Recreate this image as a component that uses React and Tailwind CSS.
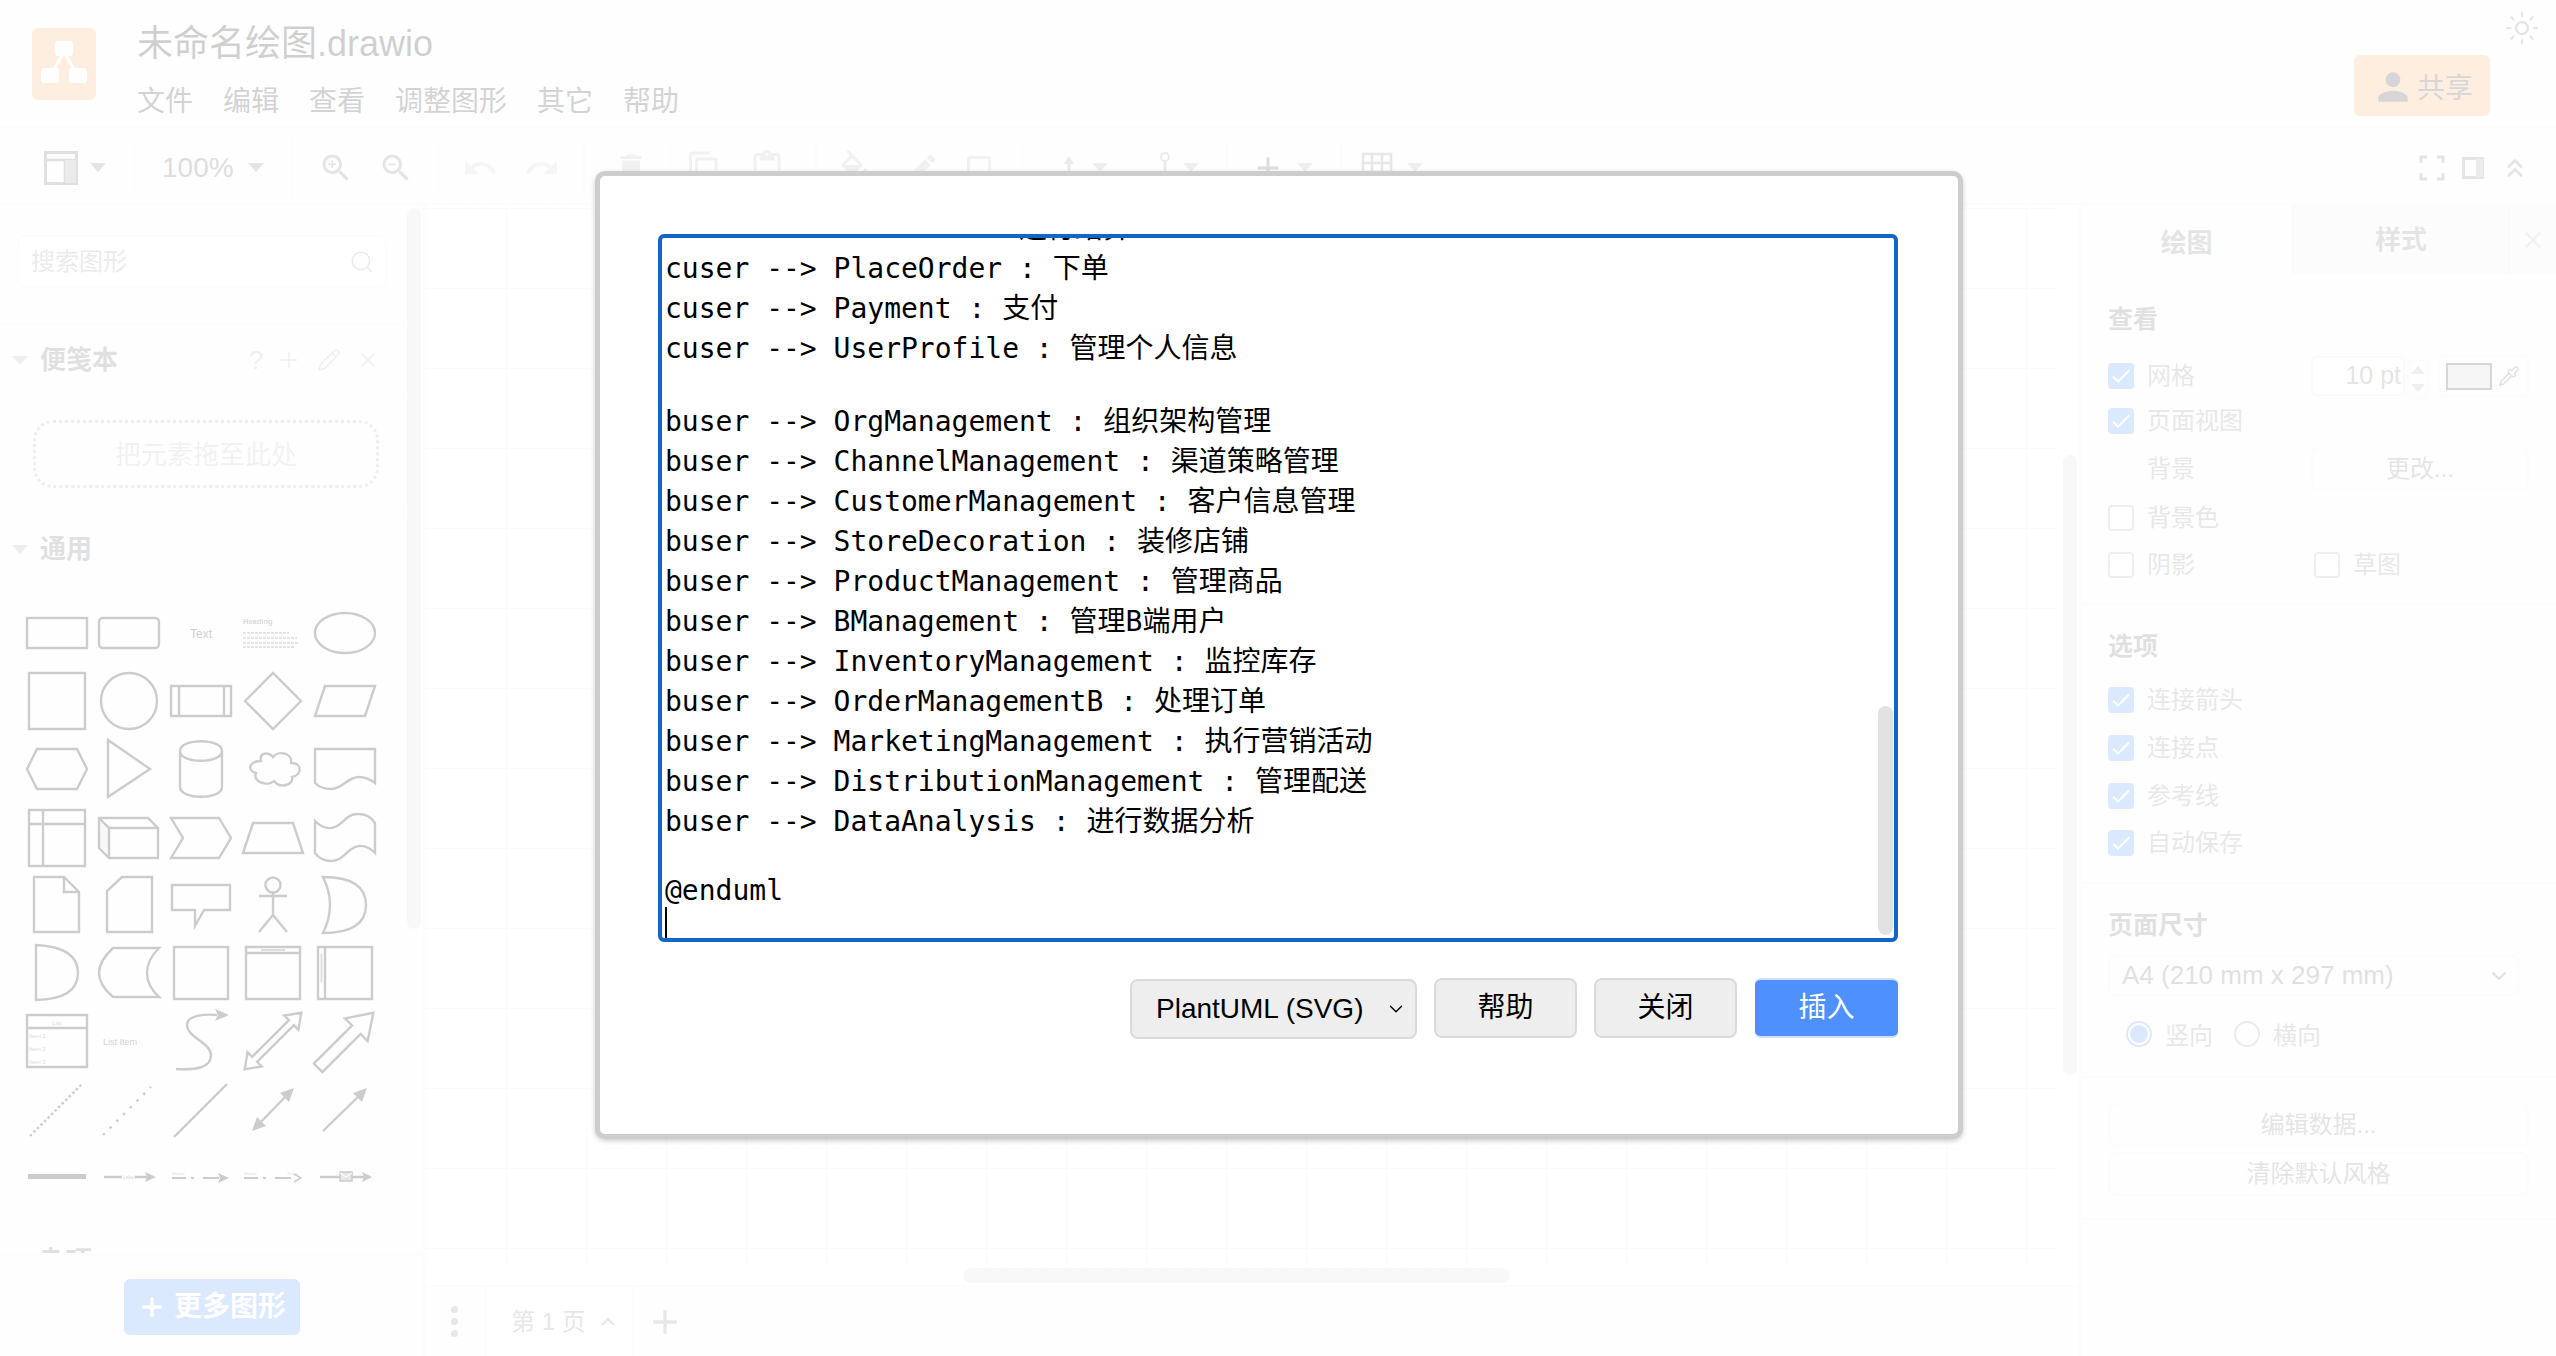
import React from 'react';
import { MdZoomIn, MdZoomOut, MdUndo, MdRedo, MdDelete, MdContentCopy, MdContentPaste, MdFormatColorFill, MdEdit, MdCropSquare, MdAdd, MdPerson, MdClose, MdCheck } from 'react-icons/md';
import { Sun, Search, ChevronsUp, Pipette, ChevronDown, Plus, X, Pencil } from 'lucide-react';

const cuserLines = [
    ['cuser --> Checkout : ', '进行结算'],
    ['cuser --> PlaceOrder : ', '下单'],
    ['cuser --> Payment : ', '支付'],
    ['cuser --> UserProfile : ', '管理个人信息'],
];

const buserLines = [
    ['buser --> OrgManagement : ', '组织架构管理'],
    ['buser --> ChannelManagement : ', '渠道策略管理'],
    ['buser --> CustomerManagement : ', '客户信息管理'],
    ['buser --> StoreDecoration : ', '装修店铺'],
    ['buser --> ProductManagement : ', '管理商品'],
    ['buser --> BManagement : ', '管理B端用户'],
    ['buser --> InventoryManagement : ', '监控库存'],
    ['buser --> OrderManagementB : ', '处理订单'],
    ['buser --> MarketingManagement : ', '执行营销活动'],
    ['buser --> DistributionManagement : ', '管理配送'],
    ['buser --> DataAnalysis : ', '进行数据分析'],
];

const Caret = ({ className = '', fill = '#777' }) => (
    <svg width="16" height="9" viewBox="0 0 16 9" className={`shrink-0 ${className}`}>
        <polygon points="0,0 16,0 8,9" fill={fill} />
    </svg>
);

const Sep = ({ className = '' }) => <div className={`w-[2px] h-[56px] bg-[#eeeeee] shrink-0 ${className}`} />;

const Tool = ({ icon: Icon, className = '', color = 'text-[#bbb]' }) => (
    <Icon size={36} className={`shrink-0 ${color} ${className}`} />
);

const ConnectionIcon = ({ className = '' }) => (
    <svg width="36" height="36" viewBox="0 0 36 36" className={`shrink-0 ${className}`}>
        <path d="M2 26h22M22 10v16" stroke="#999" strokeWidth="3" fill="none" />
        <polygon points="22,6 27,14 17,14" fill="#999" />
    </svg>
);

const WaypointIcon = ({ className = '' }) => (
    <svg width="36" height="36" viewBox="0 0 36 36" className={`shrink-0 ${className}`}>
        <path d="M0 28h18V10" stroke="#999" strokeWidth="3" fill="none" />
        <circle cx="18" cy="7" r="4" stroke="#999" strokeWidth="2" fill="none" />
    </svg>
);

const TableIcon = ({ className = '' }) => (
    <svg width="36" height="36" viewBox="0 0 36 36" className={`shrink-0 ${className}`}>
        <path d="M4 4h28v28H4zM4 13h28M4 22h28M13 4v28M23 4v28" stroke="#888" strokeWidth="2.5" fill="none" />
    </svg>
);

const s = { fill: 'none', stroke: '#000', strokeWidth: 2.4 };
const tiny = { fill: '#333', fontFamily: 'Liberation Sans, sans-serif' };

// sidebar palette, each cell is 72x68
const shapes = [
    <rect x="6" y="19" width="60" height="30" {...s} />,
    <rect x="6" y="19" width="60" height="30" rx="4" {...s} />,
    <text x="36" y="39" textAnchor="middle" fontSize="12" {...tiny} fill="#000">Text</text>,
    <g>
        <text x="6" y="25" fontSize="7.5" fontWeight="bold" {...tiny}>Heading</text>
        <path d="M6 34h46M6 39h54M6 44h56M6 48h52" stroke="#555" strokeWidth="1.5" strokeDasharray="3 1" fill="none" />
    </g>,
    <ellipse cx="36" cy="34" rx="30" ry="20" {...s} />,

    <rect x="8" y="6" width="56" height="56" {...s} />,
    <circle cx="36" cy="34" r="28" {...s} />,
    <path d="M6 19h60v30H6zM14 19v30M59 19v30" {...s} />,
    <polygon points="8,34 36,6 64,34 36,62" {...s} />,
    <polygon points="6,49 16,19 66,19 56,49" {...s} />,

    <polygon points="6,34 16,14 56,14 66,34 56,54 16,54" {...s} />,
    <polygon points="15,5 57,34 15,62" {...s} />,
    <path d="M15 16c0-13 42-13 42 0v36c0 13-42 13-42 0zM15 16c0 13 42 13 42 0" {...s} />,
    <path d="M24 26C13 26 9 35 19 38c-4 9 12 14 18 8 6 8 20 4 18-4 10-2 11-14-1-14 2-10-13-13-18-6-5-6-14-4-12 4z" {...s} />,
    <path d="M6 14h60v34q-8-6-16-6c-12 0-16 12-28 12q-10 0-16-6z" {...s} />,

    <path d="M8 7h56v56H8zM8 21h56M22 7v56" {...s} />,
    <g><path d="M6 15h49l10 10v30H16L6 45z" {...s} /><path d="M6 15l10 10h49M16 25v30" {...s} /><polygon points="6,15 16,25 16,55 6,45" fill="#000" opacity="0.12" /></g>,
    <polygon points="6,15 54,15 66,35 54,55 6,55 18,35" {...s} />,
    <polygon points="6,50 16,20 56,20 66,50" {...s} />,
    <path d="M6 18q8 8 16 7c12-1 14-15 28-14q10 0 16 9v30q-8-8-16-7c-12 1-14 15-28 15q-10 0-16-8z" {...s} />,

    <path d="M13 6h30l15 15v40H13zM43 6v15h15" {...s} />,
    <polygon points="29,6 59,6 59,61 14,61 14,20" {...s} />,
    <polygon points="7,14 65,14 65,39 39,39 30,55 30,39 7,39" {...s} />,
    <g><circle cx="36" cy="14" r="7.500" {...s} /><path d="M22 25h28M36 22v22M36 44L22 61M36 44l14 17" {...s} /></g>,
    <path d="M14 6q43 0 43 28T14 62q14-28 0-56z" {...s} />,

    <path d="M15 6q42 2 42 28t-42 27z" {...s} />,
    <path d="M20 9h46q-12 12-12 25t12 24H20Q6 46 6 34T20 9z" {...s} />,
    <rect x="9" y="8" width="54" height="52" {...s} />,
    <g><path d="M9 8h54v52H9zM9 14h54" {...s} /><path d="M24 11h24" stroke="#555" strokeWidth="2" /></g>,
    <g><path d="M9 8h54v52H9zM16 8v52" {...s} /><path d="M12.500 15v28" stroke="#555" strokeWidth="2" /></g>,

    <g>
        <path d="M6 8h60v52H6zM6 21h60" {...s} />
        <text x="36" y="18" textAnchor="middle" fontSize="6" {...tiny}>List</text>
        <text x="8" y="31" fontSize="6" {...tiny}>Item 1</text>
        <text x="8" y="44" fontSize="6" {...tiny}>Item 2</text>
        <text x="8" y="57" fontSize="6" {...tiny}>Item 3</text>
    </g>,
    <text x="10" y="38" fontSize="9" {...tiny} fill="#000">List Item</text>,
    <g><path d="M11 62c20 1 35-1 35-14 0-12-24-18-24-30 0-10 18-11 30-10" {...s} /><polygon points="64,8 50,2 53,8 50,14" fill="#000" /></g>,
    <polygon transform="rotate(-45 36 34)" points="-4,34 10,24 10,30.500 62,30.500 62,24 76,34 62,44 62,37.500 10,37.500 10,44" {...s} />,
    <polygon transform="rotate(-45 36 34)" points="-2,28 52,28 52,18 76,34 52,50 52,40 -2,40" {...s} />,

    <path d="M9 61L61 9" fill="none" stroke="#000" strokeWidth="2.4" strokeDasharray="2.500 2.500" />,
    <path d="M10 60L58 12" fill="none" stroke="#000" strokeWidth="2.400" strokeDasharray="2.500 7" />,
    <path d="M9 62L62 9" {...s} />,
    <g><path d="M19 52L53 17" {...s} /><polygon points="57,13 52,27 43,18" fill="#000" /><polygon points="15,56 20,42 29,51" fill="#000" /></g>,
    <g><path d="M14 56L54 17" {...s} /><polygon points="58,13 53,27 44,18" fill="#000" /></g>,

    <rect x="7" y="31" width="58" height="5" fill="#000" />,
    <g><path d="M11 34h18M42 34h12" {...s} /><polygon points="63,34 52,29 54,34 52,39" fill="#000" /><text x="36" y="36" textAnchor="middle" fontSize="5" {...tiny}>Label</text></g>,
    <g><path d="M7 35h14M26 35h3M38 35h16" {...s} strokeWidth="2" /><polygon points="64,35 53,30 55,35 53,40" fill="#000" /><text x="7" y="32" fontSize="4" {...tiny}>Source</text></g>,
    <g><path d="M7 35h14M26 35h3M38 35h16" {...s} strokeWidth="2" /><path d="M57 31l7 4-7 4" {...s} strokeWidth="1.500" /><text x="7" y="32" fontSize="4" {...tiny}>Source</text><text x="50" y="32" fontSize="4" {...tiny}>Target</text></g>,
    <g><path d="M11 34h50" {...s} /><polygon points="63,34 53,29 55,34 53,39" fill="#000" /><rect x="31" y="29" width="12" height="9" fill="#888" stroke="#000" strokeWidth="1.500" /><path d="M31 30l6 4 6-4" fill="none" stroke="#fff" strokeWidth="1" /></g>,
];

const Palette = () => (
    <div className="grid grid-cols-[repeat(5,72px)] auto-rows-[68px] pl-[21px] pt-[14px] h-[638px]">
        {shapes.map((shape, i) => (
            <svg key={i} width="72" height="68" viewBox="0 0 72 68">{shape}</svg>
        ))}
    </div>
);

const Section = ({ title, right }) => (
    <div className="flex items-center h-full pl-[12px] pt-[2px]">
        <Caret className="opacity-60" />
        <span className="ml-[12px] text-[26px] font-bold text-[#666]">{title}</span>
        {right}
    </div>
);

const Sidebar = () => (
    <div className="relative w-[425px] shrink-0 flex flex-col bg-[#fbfbfb] border-r-2 border-[#f2f2f2]">
        <div className="flex-1 overflow-hidden w-[405px]">
            <div className="h-[120px] border-b-2 border-[#eeeeee] pt-[30px] pl-[17px]">
                <div className="w-[370px] h-[53px] rounded-[8px] border-2 border-[#eeeeee] bg-white flex items-center justify-between pl-[12px] pr-[10px]">
                    <span className="text-[24px] text-[#999]">搜索图形</span>
                    <Search size={26} strokeWidth={1.500} className="text-[#999]" />
                </div>
            </div>
            <div className="h-[70px] border-b-2 border-[#f4f4f4]">
                <Section title="便笺本" right={
                    <div className="ml-auto flex items-center mr-[24px] text-[#aaa]">
                        <span className="text-[26px] w-[20px] text-center">?</span>
                        <Plus size={26} strokeWidth={1.500} className="ml-[10px]" />
                        <Pencil size={24} strokeWidth={1.500} className="ml-[15px]" />
                        <X size={26} strokeWidth={1.500} className="ml-[14px]" />
                    </div>
                } />
            </div>
            <div className="h-[118px] border-b-2 border-[#eeeeee] pt-[25px] pl-[33px]">
                <div className="w-[346px] h-[68px] pt-[2px] rounded-[20px] border-[3px] border-dotted border-[#aaaaaa] flex items-center justify-center text-[26px] text-[#bbb]">把元素拖至此处</div>
            </div>
            <div className="h-[72px] border-b-2 border-[#f4f4f4]">
                <Section title="通用" />
            </div>
            <Palette />
            <div className="border-t-2 border-[#eeeeee] h-[72px]">
                <Section title="杂项" />
            </div>
        </div>
        <div className="h-[103px] shrink-0 border-t-2 border-[#eeeeee] bg-[#fbfbfb] pt-[24px] pl-[124px] relative">
            <div className="w-[176px] h-[56px] rounded-[6px] bg-[#4d90fe] text-white font-bold text-[28px] flex items-center justify-center gap-[8px]">
                <Plus size={28} strokeWidth={3} />
                <span>更多图形</span>
            </div>
        </div>
        <div className="absolute left-[407px] top-[3px] w-[14px] h-[721px] rounded-full bg-[#dddddd]" />
    </div>
);

const Check = ({ on, className = '' }) => (
    <div className={`w-[26px] h-[26px] rounded-[4px] shrink-0 flex items-center justify-center ${on ? 'bg-[#4d90fe]' : 'border-2 border-[#aaaaaa] bg-white'} ${className}`}>
        {on && <MdCheck size={24} className="text-white" />}
    </div>
);

const Row = ({ on, label, className = '', children }) => (
    <div className={`h-[44px] flex items-center ${className}`}>
        {on !== undefined ? <Check on={on} /> : <div className="w-[26px] shrink-0" />}
        <span className="ml-[13px] text-[24px] text-[#888]">{label}</span>
        {children}
    </div>
);

const PanelTitle = ({ children }) => <div className="h-[40px] flex items-center text-[25px] font-bold text-[#666]">{children}</div>;

const WideButton = ({ children, className = '' }) => (
    <div className={`h-[44px] rounded-[8px] border-2 border-[#eeeeee] bg-[#fafafa] flex items-center justify-center text-[24px] text-[#777] ${className}`}>{children}</div>
);

const FormatPanel = () => (
    <div className="w-[477px] shrink-0 bg-[#f8f8f8] border-l-2 border-[#eeeeee] flex flex-col">
        <div className="h-[69px] flex shrink-0">
            <div className="w-[211px] bg-[#f8f8f8] flex items-center justify-center text-[26px] font-bold text-[#777] pt-[8px]">绘图</div>
            <div className="w-[216px] bg-[#eeeeee] flex items-center justify-center text-[26px] font-bold text-[#777] pt-[2px] border-l-2 border-[#e8e8e8]">样式</div>
            <div className="flex-1 bg-[#eeeeee] flex items-center justify-center border-l-2 border-[#e8e8e8]">
                <MdClose size={28} className="text-[#bbb]" />
            </div>
        </div>
        <div className="pl-[27px] pr-[27px] pt-[26px] pb-[16px] border-b-2 border-[#eeeeee]">
            <PanelTitle>查看</PanelTitle>
            <Row on label="网格" className="mt-[14px]">
                <div className="ml-auto flex items-center gap-[2px]">
                    <div className="w-[94px] h-[40px] rounded-[6px] border-2 border-[#e4e4e4] bg-white flex items-center justify-end pr-[2px] text-[25px] text-[#777]">10 pt</div>
                    <div className="w-[22px] h-[40px] mt-[5px] rounded-[6px] border-2 border-[#eeeeee] flex flex-col items-center justify-around">
                        <svg width="14" height="8" viewBox="0 0 14 8"><polygon points="7,0 14,8 0,8" fill="#aaa" /></svg>
                        <svg width="14" height="8" viewBox="0 0 14 8"><polygon points="0,0 14,0 7,8" fill="#aaa" /></svg>
                    </div>
                    <div className="ml-[7px] w-[91px] h-[42px] rounded-[6px] border-2 border-[#eeeeee] flex items-center pl-[6px]">
                        <div className="w-[46px] h-[27px] border-2 border-[#333333] bg-[#cccccc]" />
                        <Pipette size={22} strokeWidth={1.500} className="ml-[6px] text-[#666]" />
                    </div>
                </div>
            </Row>
            <Row on label="页面视图" className="mt-[1px]" />
            <Row label="背景" className="mt-[4px]">
                <WideButton className="ml-auto w-[218px]">更改...</WideButton>
            </Row>
            <Row on={false} label="背景色" className="mt-[5px]" />
            <Row on={false} label="阴影" className="mt-[3px]">
                <Check on={false} className="ml-[119px]" />
                <span className="ml-[13px] text-[24px] text-[#888]">草图</span>
            </Row>
        </div>
        <div className="pl-[27px] pr-[27px] pt-[22px] pb-[17px] border-b-2 border-[#eeeeee]">
            <PanelTitle>选项</PanelTitle>
            <Row on label="连接箭头" className="mt-[11px]" />
            <Row on label="连接点" className="mt-[4px]" />
            <Row on label="参考线" className="mt-[4px]" />
            <Row on label="自动保存" className="mt-[3px]" />
        </div>
        <div className="pl-[27px] pr-[27px] pt-[22px] pb-[18px] border-b-2 border-[#eeeeee]">
            <PanelTitle>页面尺寸</PanelTitle>
            <div className="mt-[9px] w-[411px] h-[41px] rounded-[6px] border-2 border-[#eeeeee] bg-[#f8f8f8] flex items-center justify-between pl-[12px] pr-[6px] text-[26px] text-[#666]">
                <span>A4 (210 mm x 297 mm)</span>
                <ChevronDown size={24} className="text-[#666]" />
            </div>
            <div className="mt-[18px] h-[44px] flex items-center pl-[18px] text-[24px] text-[#888]">
                <div className="w-[26px] h-[26px] rounded-full border-2 border-[#4d90fe] flex items-center justify-center -mt-[5px]">
                    <div className="w-[18px] h-[18px] rounded-full bg-[#4d90fe]" />
                </div>
                <span className="ml-[13px]">竖向</span>
                <div className="ml-[21px] w-[26px] h-[26px] rounded-full border-2 border-[#999999] -mt-[5px]" />
                <span className="ml-[13px]">横向</span>
            </div>
        </div>
        <div className="pl-[27px] pr-[27px] pt-[25px] pb-[22px] border-b-2 border-[#eeeeee]">
            <WideButton>编辑数据...</WideButton>
            <WideButton className="mt-[5px]">清除默认风格</WideButton>
        </div>
    </div>
);

const Canvas = () => (
    <div className="relative flex-1 flex flex-col min-w-0">
        <div className="flex-1 relative bg-white bg-[linear-gradient(#e8e8e8_1px,transparent_1px),linear-gradient(90deg,#e8e8e8_1px,transparent_1px),linear-gradient(#f3f3f3_1px,transparent_1px),linear-gradient(90deg,#f3f3f3_1px,transparent_1px)] bg-[size:80px_80px,80px_80px,20px_20px,20px_20px] bg-[position:1px_3px,1px_3px,1px_3px,1px_3px]">
            <div className="absolute right-0 top-0 bottom-0 w-[20px] bg-white" />
            <div className="absolute left-0 right-0 bottom-0 h-[20px] bg-white" />
            <div className="absolute left-[538px] bottom-[2px] w-[547px] h-[15px] rounded-full bg-[#dddddd]" />
            <div className="absolute right-[2px] top-[250px] w-[14px] h-[620px] rounded-full bg-[#dddddd]" />
        </div>
        <div className="h-[71px] shrink-0 border-t-2 border-[#eeeeee] bg-[#f8f8f8] flex items-center">
            <div className="w-[62px] h-full border-r-2 border-[#eeeeee] flex flex-col items-center justify-center gap-[5px] pr-[2px]">
                <div className="w-[7px] h-[7px] rounded-full bg-[#888]" />
                <div className="w-[7px] h-[7px] rounded-full bg-[#888]" />
                <div className="w-[7px] h-[7px] rounded-full bg-[#888]" />
            </div>
            <div className="w-[147px] h-full border-r-2 border-[#eeeeee] bg-white flex items-center pl-[24px] text-[24px] text-[#888]">
                <span>第 1 页</span>
                <svg width="14" height="9" viewBox="0 0 14 9" className="ml-[15px]"><path d="M1 8l6-6 6 6" fill="none" stroke="#888" strokeWidth="2" /></svg>
            </div>
            <MdAdd size={40} className="ml-[11px] text-[#888]" />
        </div>
    </div>
);

const Header = () => (
    <div className="h-[128px] shrink-0 border-b-2 border-[#eeeeee] flex relative pl-[32px] pt-[28px]">
        <svg width="64" height="72" viewBox="0 0 64 72" className="shrink-0">
            <rect width="64" height="72" rx="6" fill="#f5a85f" />
            <path d="M32 24L18 48M32 24l14 24" stroke="#fff" strokeWidth="3" />
            <rect x="23" y="13" width="18" height="15" rx="3" fill="#fff" />
            <rect x="9" y="40" width="18" height="15" rx="3" fill="#fff" />
            <rect x="37" y="40" width="18" height="15" rx="3" fill="#fff" />
        </svg>
        <div className="ml-[41px] -mt-[28px]">
            <div className="h-[87px] flex items-center text-[36px] text-[#111]">未命名绘图.drawio</div>
            <div className="flex gap-[30px] text-[28px] text-[#222] -mt-[3px] leading-[36px]">
                <span>文件</span><span>编辑</span><span>查看</span><span>调整图形</span><span>其它</span><span>帮助</span>
            </div>
        </div>
        <Sun size={36} strokeWidth={1.500} className="absolute right-[16px] top-[10px] text-[#777]" />
        <div className="absolute left-[2354px] top-[55px] w-[136px] h-[61px] rounded-[6px] bg-[#f5a85f] flex items-center justify-center gap-[2px] pt-[6px] text-[28px] text-[#333]">
            <MdPerson size={44} className="text-[#333] -mt-[4px]" />
            <span>共享</span>
        </div>
    </div>
);

const Toolbar = () => (
    <div className="h-[77px] shrink-0 border-b-2 border-[#eeeeee] flex items-center pl-[44px] pr-[26px] pt-[4px] bg-[#f8f8f8]">
        <svg width="34" height="34" viewBox="0 0 34 34" className="shrink-0">
            <rect x="1.500" y="1.500" width="31" height="31" fill="none" stroke="#666" strokeWidth="3" />
            <path d="M1.500 9h31M21 9v24" stroke="#666" strokeWidth="2.500" fill="none" />
            <rect x="21" y="9" width="11" height="23" fill="#999" />
        </svg>
        <Caret className="ml-[12px]" />
        <Sep className="ml-[27px]" />
        <span className="ml-[27px] text-[28px] text-[#555]">100%</span>
        <Caret className="ml-[14px]" />
        <Sep className="ml-[27px]" />
        <Tool icon={MdZoomIn} className="ml-[25px]" color="text-[#777]" />
        <Tool icon={MdZoomOut} className="ml-[24px]" color="text-[#777]" />
        <Sep className="ml-[23px]" />
        <Tool icon={MdUndo} className="ml-[23px]" color="text-[#ccc]" />
        <Tool icon={MdRedo} className="ml-[26px]" color="text-[#ccc]" />
        <Sep className="ml-[23px]" />
        <Tool icon={MdDelete} className="ml-[28px]" />
        <Sep className="ml-[20px]" />
        <Tool icon={MdContentCopy} className="ml-[15px]" />
        <Tool icon={MdContentPaste} className="ml-[27px]" />
        <Sep className="ml-[30px]" />
        <Tool icon={MdFormatColorFill} className="ml-[20px]" />
        <Tool icon={MdEdit} className="ml-[31px]" />
        <Tool icon={MdCropSquare} className="ml-[21px]" />
        <Sep className="ml-[24px]" />
        <ConnectionIcon className="ml-[24px]" />
        <Caret className="ml-[9px]" fill="#aaa" />
        <WaypointIcon className="ml-[39px]" />
        <Caret className="ml-0" fill="#aaa" />
        <Sep className="ml-[27px]" />
        <Tool icon={MdAdd} className="ml-[22px]" color="text-[#555]" />
        <Caret className="ml-[11px]" fill="#aaa" />
        <Sep className="ml-[27px]" />
        <TableIcon className="ml-[17px]" />
        <Caret className="ml-[12px]" fill="#aaa" />
        <div className="ml-auto flex items-center">
            <svg width="26" height="26" viewBox="0 0 26 26">
                <path d="M2 8V2h6M18 2h6v6M24 18v6h-6M8 24H2v-6" fill="none" stroke="#777" strokeWidth="3" />
            </svg>
            <svg width="22" height="22" viewBox="0 0 22 22" className="ml-[17px]">
                <rect x="1.500" y="1.500" width="19" height="19" fill="none" stroke="#777" strokeWidth="3" />
                <rect x="14" y="2" width="7" height="18" fill="#999" />
            </svg>
            <ChevronsUp size={30} className="ml-[16px] text-[#777]" />
        </div>
    </div>
);

const CodeLine = ({ text, cn }) => (
    <div className="h-[40px] flex items-center whitespace-pre">{text}{cn}</div>
);

const Dialog = () => (
    <div className="absolute left-[595px] top-[171px] w-[1368px] h-[968px] rounded-[10px] border-[5px] border-[#cdcdcd] bg-white shadow-[0_2px_5px_rgba(0,0,0,0.2)] pt-[58px] px-[58px]">
        <div className="relative h-[708px] w-[1240px] rounded-[6px] border-4 border-[#1565c8] overflow-hidden bg-white pl-[3px] font-['DejaVu_Sans_Mono','Noto_Sans_CJK_SC',monospace] text-[28px] text-black">
            <div className="-mt-[29px]">
                {cuserLines.map(([a, b]) => <CodeLine key={a} text={a} cn={b} />)}
                <div className="h-[33px]" />
                {buserLines.map(([a, b]) => <CodeLine key={a} text={a} cn={b} />)}
                <div className="h-[32px]" />
                <div className="h-[33px] flex items-center">@enduml</div>
                <div className="h-[31px] w-[2px] bg-black" />
            </div>
            <div className="absolute right-[1px] bottom-[3px] w-[15px] h-[229px] rounded-full bg-[#e2e2e2]" />
        </div>
        <div className="mt-[36px] flex justify-end items-start text-[28px] w-[1240px]">
            <div className="w-[287px] h-[60px] mt-[1px] rounded-[8px] border-2 border-[#dadada] bg-[#eeeeee] flex items-center justify-between pl-[24px] pr-[8px] text-black">
                <span>PlantUML (SVG)</span>
                <ChevronDown size={22} strokeWidth={1.500} />
            </div>
            <div className="ml-[17px] w-[143px] h-[60px] rounded-[8px] border-2 border-[#dadada] bg-[#eeeeee] flex items-center justify-center text-black">帮助</div>
            <div className="ml-[17px] w-[143px] h-[60px] rounded-[8px] border-2 border-[#dadada] bg-[#eeeeee] flex items-center justify-center text-black">关闭</div>
            <div className="ml-[18px] w-[143px] h-[60px] rounded-[6px] border-t-2 border-b-2 border-[#cfe0fa] bg-[#4d90fe] flex items-center justify-center text-white">插入</div>
        </div>
    </div>
);

export default function App() {
    return (
        <div className="relative w-[2556px] h-[1356px] overflow-hidden flex flex-col bg-[#f8f8f8] font-['Liberation_Sans','Noto_Sans_CJK_SC',sans-serif]">
            <Header />
            <Toolbar />
            <div className="flex-1 flex min-h-0">
                <Sidebar />
                <Canvas />
                <FormatPanel />
            </div>
            {/* modal backdrop */}
            <div className="absolute inset-0 bg-white/80" />
            <Dialog />
        </div>
    );
}
